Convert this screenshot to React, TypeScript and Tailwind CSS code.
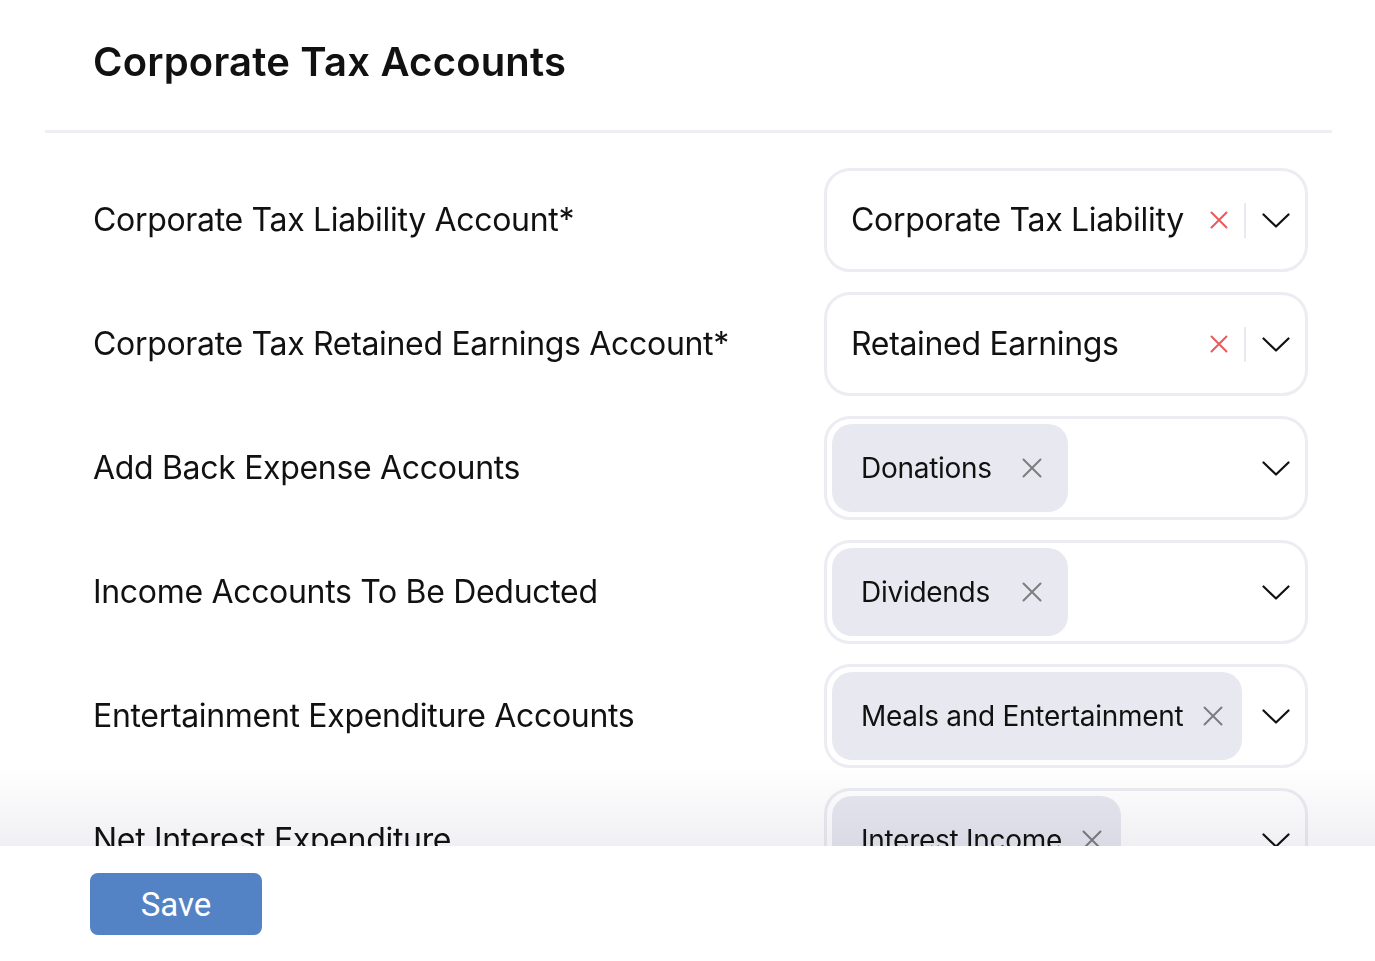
import React from "react";

const Chevron = () => (
  <svg width="28" height="15" viewBox="0 0 28 15" fill="none" className="shrink-0">
    <path d="M1.5 1.5 L14 13.5 L26.5 1.5" stroke="#111" strokeWidth="2.2" strokeLinecap="round" strokeLinejoin="round" />
  </svg>
);

const RedX = () => (
  <svg width="18" height="18" viewBox="0 0 18 18" fill="none" className="shrink-0">
    <path d="M1.5 1.5 L16.5 16.5 M16.5 1.5 L1.5 16.5" stroke="#ea5a5c" strokeWidth="2" strokeLinecap="round" />
  </svg>
);

const GrayX = () => (
  <svg width="20" height="20" viewBox="0 0 20 20" fill="none" className="shrink-0">
    <path d="M1.5 1.5 L18.5 18.5 M18.5 1.5 L1.5 18.5" stroke="#7d7d80" strokeWidth="2" strokeLinecap="round" />
  </svg>
);

type Row = { label: string; value: string; multi: boolean };

const rows: Row[] = [
  { label: "Corporate Tax Liability Account*", value: "Corporate Tax Liability", multi: false },
  { label: "Corporate Tax Retained Earnings Account*", value: "Retained Earnings", multi: false },
  { label: "Add Back Expense Accounts", value: "Donations", multi: true },
  { label: "Income Accounts To Be Deducted", value: "Dividends", multi: true },
  { label: "Entertainment Expenditure Accounts", value: "Meals and Entertainment", multi: true },
  { label: "Net Interest Expenditure", value: "Interest Income", multi: true },
];

function SingleSelect({ value }: { value: string }) {
  return (
    <div className="flex h-[104px] w-[484px] shrink-0 items-center rounded-[26px] border-[3px] border-[#ececf2] pl-[24px] pr-[15px]">
      <span className="flex-1 whitespace-nowrap text-[32px] leading-[40px] tracking-[-0.01em] text-[#111]">{value}</span>
      <RedX />
      <div className="ml-[16px] h-[35px] w-[2px] bg-[#e9e9ef]" />
      <div className="ml-[16px]">
        <Chevron />
      </div>
    </div>
  );
}

function MultiSelect({ value }: { value: string }) {
  return (
    <div className="flex h-[104px] w-[484px] shrink-0 items-center rounded-[26px] border-[3px] border-[#ececf2] pl-[5px] pr-[15px]">
      <div className="flex h-[88px] min-w-[236px] items-center gap-[20px] rounded-[20px] bg-[#e8e8f0] pl-[29px] pr-[19px]">
        <span className="min-w-[141px] whitespace-nowrap text-[28px] leading-[36px] tracking-[-0.01em] text-[#111]">{value}</span>
        <GrayX />
      </div>
      <div className="flex-1" />
      <Chevron />
    </div>
  );
}

export default function App() {
  return (
    <div className="relative h-[961px] w-full overflow-hidden bg-white font-['Inter',sans-serif] text-[#111]">
      <div className="mx-[45px] mr-[43px] border-b-[3px] border-[#eeeef3] pb-[45px] pl-[48px] pt-[39px]">
        <h1 className="text-[40px] font-semibold leading-[46px] tracking-[0.005em]">Corporate Tax Accounts</h1>
      </div>

      <div className="flex flex-col gap-[20px] pl-[93px] pr-[67px] pt-[35px]">
        {rows.map((r) => (
          <div key={r.label} className="flex items-center justify-between">
            <span className="text-[32px] leading-[40px] tracking-[-0.01em] text-[#111]">{r.label}</span>
            {r.multi ? <MultiSelect value={r.value} /> : <SingleSelect value={r.value} />}
          </div>
        ))}
      </div>

      <div className="pointer-events-none absolute left-0 right-0 top-[766px] h-[80px] bg-gradient-to-b from-[#ffffff] to-[#f0f0f4] mix-blend-multiply" />

      <div className="absolute bottom-0 left-0 right-0 top-[846px] bg-white pl-[90px] pt-[27px]">
        <button className="h-[62px] w-[172px] rounded-[8px] bg-[#5383c4] font-['Roboto',sans-serif] text-[33px] leading-none text-white">
          Save
        </button>
      </div>
    </div>
  );
}
